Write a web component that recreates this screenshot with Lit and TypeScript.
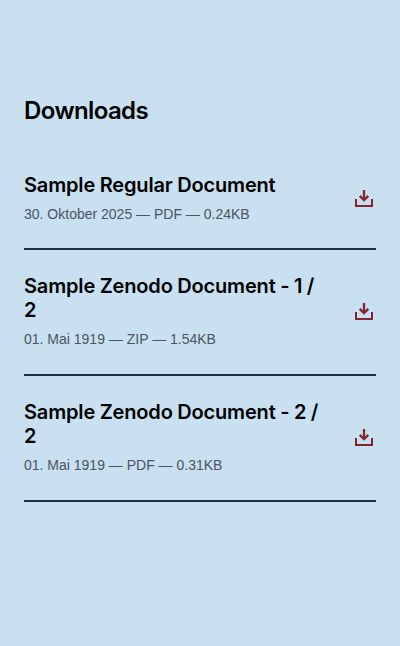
import { LitElement, html, css } from "lit";
import { customElement } from "lit/decorators.js";

interface Doc { title: string; meta: string; }

const docs: Doc[] = [
  { title: "Sample Regular Document", meta: "30. Oktober 2025 — PDF — 0.24KB" },
  { title: "Sample Zenodo Document - 1 / 2", meta: "01. Mai 1919 — ZIP — 1.54KB" },
  { title: "Sample Zenodo Document - 2 / 2", meta: "01. Mai 1919 — PDF — 0.31KB" },
];

@customElement("app-root")
export class AppRoot extends LitElement {
  static styles = css`
    :host { display: block; box-sizing: border-box; min-height: 646px; padding: 95px 24px 0; background: #c8e0ef; color: #000; font-family: "Liberation Sans", Arial, sans-serif; }
    h2 { margin: 0; font-family: Inter, "Liberation Sans", sans-serif; font-size: 24px; line-height: 31px; font-weight: 600; letter-spacing: -0.6px; }
    ul { list-style: none; margin: 23px 0 0; padding: 0; }
    li { display: flex; align-items: center; justify-content: space-between; padding: 24px 0; border-bottom: 2px solid #1c3144; }
    li + li { padding-bottom: 25px; }
    .text { width: 300px; }
    h3 { margin: 0; font-family: Inter, "Liberation Sans", sans-serif; font-size: 20px; line-height: 24px; font-weight: 600; letter-spacing: -0.16px; word-spacing: -0.3px; }
    p { margin: 7px 0 0; font-size: 14px; line-height: 20px; color: #4b5563; }
    svg { display: block; width: 24px; height: 24px; fill: none; stroke: #842631; stroke-width: 2; }
    .arrow { stroke-width: 2.3; }
  `;
  render() {
    return html`<h2>Downloads</h2>
      <ul>
        ${docs.map((d) => html`<li>
          <div class="text"><h3>${d.title}</h3><p>${d.meta}</p></div>
          <svg viewBox="0 0 24 24"><path d="M4 12v7h16v-7" /><path class="arrow" d="M12 3v10M7.7 8.9l4.3 4.3 4.3-4.3" /></svg>
        </li>`)}
      </ul>`;
  }
}
